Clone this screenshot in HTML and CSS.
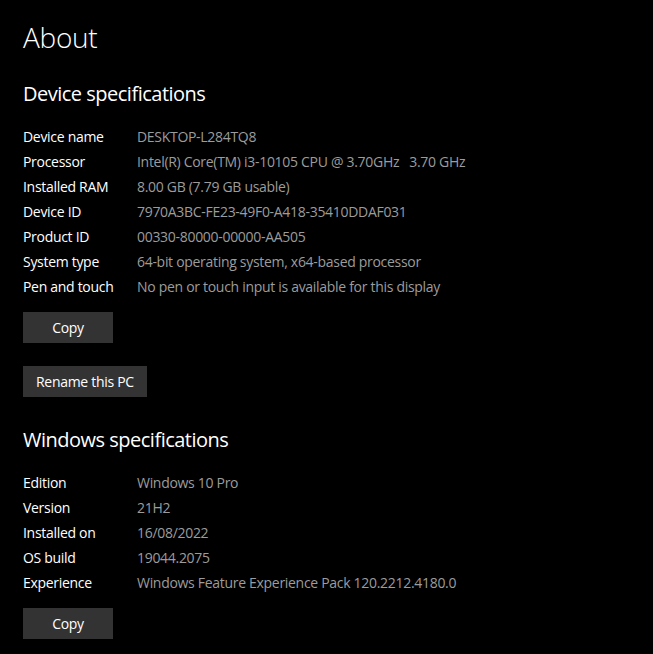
FILE: index.html
```html
<!DOCTYPE html>
<html lang="en">
<head>
    <meta charset="UTF-8">
    <meta name="viewport" content="width=device-width, initial-scale=1.0">
    <title>About</title>
    <link rel="stylesheet" href="styles.css">
</head>
<body>
    <div class="page">
        <h1 class="title">About</h1>

        <section class="section">
            <h2 class="section-title">Device specifications</h2>
            <dl class="specs">
                <dt>Device name</dt><dd>DESKTOP-L284TQ8</dd>
                <dt>Processor</dt><dd>Intel(R) Core(TM) i3-10105 CPU @ 3.70GHz&nbsp;&nbsp;&nbsp;3.70 GHz</dd>
                <dt>Installed RAM</dt><dd>8.00 GB (7.79 GB usable)</dd>
                <dt>Device ID</dt><dd>7970A3BC-FE23-49F0-A418-35410DDAF031</dd>
                <dt>Product ID</dt><dd>00330-80000-00000-AA505</dd>
                <dt>System type</dt><dd>64-bit operating system, x64-based processor</dd>
                <dt>Pen and touch</dt><dd>No pen or touch input is available for this display</dd>
            </dl>
            <div class="actions">
                <button class="btn">Copy</button>
                <button class="btn">Rename this PC</button>
            </div>
        </section>

        <section class="section section-windows">
            <h2 class="section-title">Windows specifications</h2>
            <dl class="specs">
                <dt>Edition</dt><dd>Windows 10 Pro</dd>
                <dt>Version</dt><dd>21H2</dd>
                <dt>Installed on</dt><dd>16/08/2022</dd>
                <dt>OS build</dt><dd>19044.2075</dd>
                <dt>Experience</dt><dd>Windows Feature Experience Pack 120.2212.4180.0</dd>
            </dl>
            <div class="actions">
                <button class="btn">Copy</button>
            </div>
        </section>
    </div>
</body>
</html>
```

FILE: styles.css
```css
:root {
    --text-primary: #ffffff;
    --text-secondary: #9c9c9c;
    --button-bg: #333333;
}

body {
    margin: 0;
    background: #000000;
    color: var(--text-primary);
    font-family: 'Open Sans', 'Noto Sans', sans-serif;
}

.page {
    padding: 19px 23px 0;
}

.title {
    margin: 0;
    font-size: 28px;
    font-weight: 300;
    line-height: 36px;
    letter-spacing: -0.3px;
}

.section {
    margin-top: 25px;
}

.section-windows {
    margin-top: 29px;
}

.section-title {
    margin: 0;
    font-size: 20px;
    font-weight: 400;
    line-height: 28px;
    letter-spacing: -0.5px;
}

.specs {
    display: grid;
    grid-template-columns: 114px 1fr;
    grid-auto-rows: 25px;
    margin: 16px 0 0;
    font-size: 14px;
    line-height: 25px;
    letter-spacing: -0.3px;
}

.specs dt {
    color: var(--text-primary);
}

.specs dd {
    margin: 0;
    color: var(--text-secondary);
    white-space: nowrap;
}

.actions {
    display: flex;
    flex-direction: column;
    align-items: flex-start;
    gap: 23px;
    margin-top: 13px;
}

.btn {
    min-width: 90px;
    height: 31px;
    padding: 0 13px;
    border: none;
    background: var(--button-bg);
    color: var(--text-primary);
    font-family: inherit;
    font-size: 14px;
    letter-spacing: -0.3px;
}
```
